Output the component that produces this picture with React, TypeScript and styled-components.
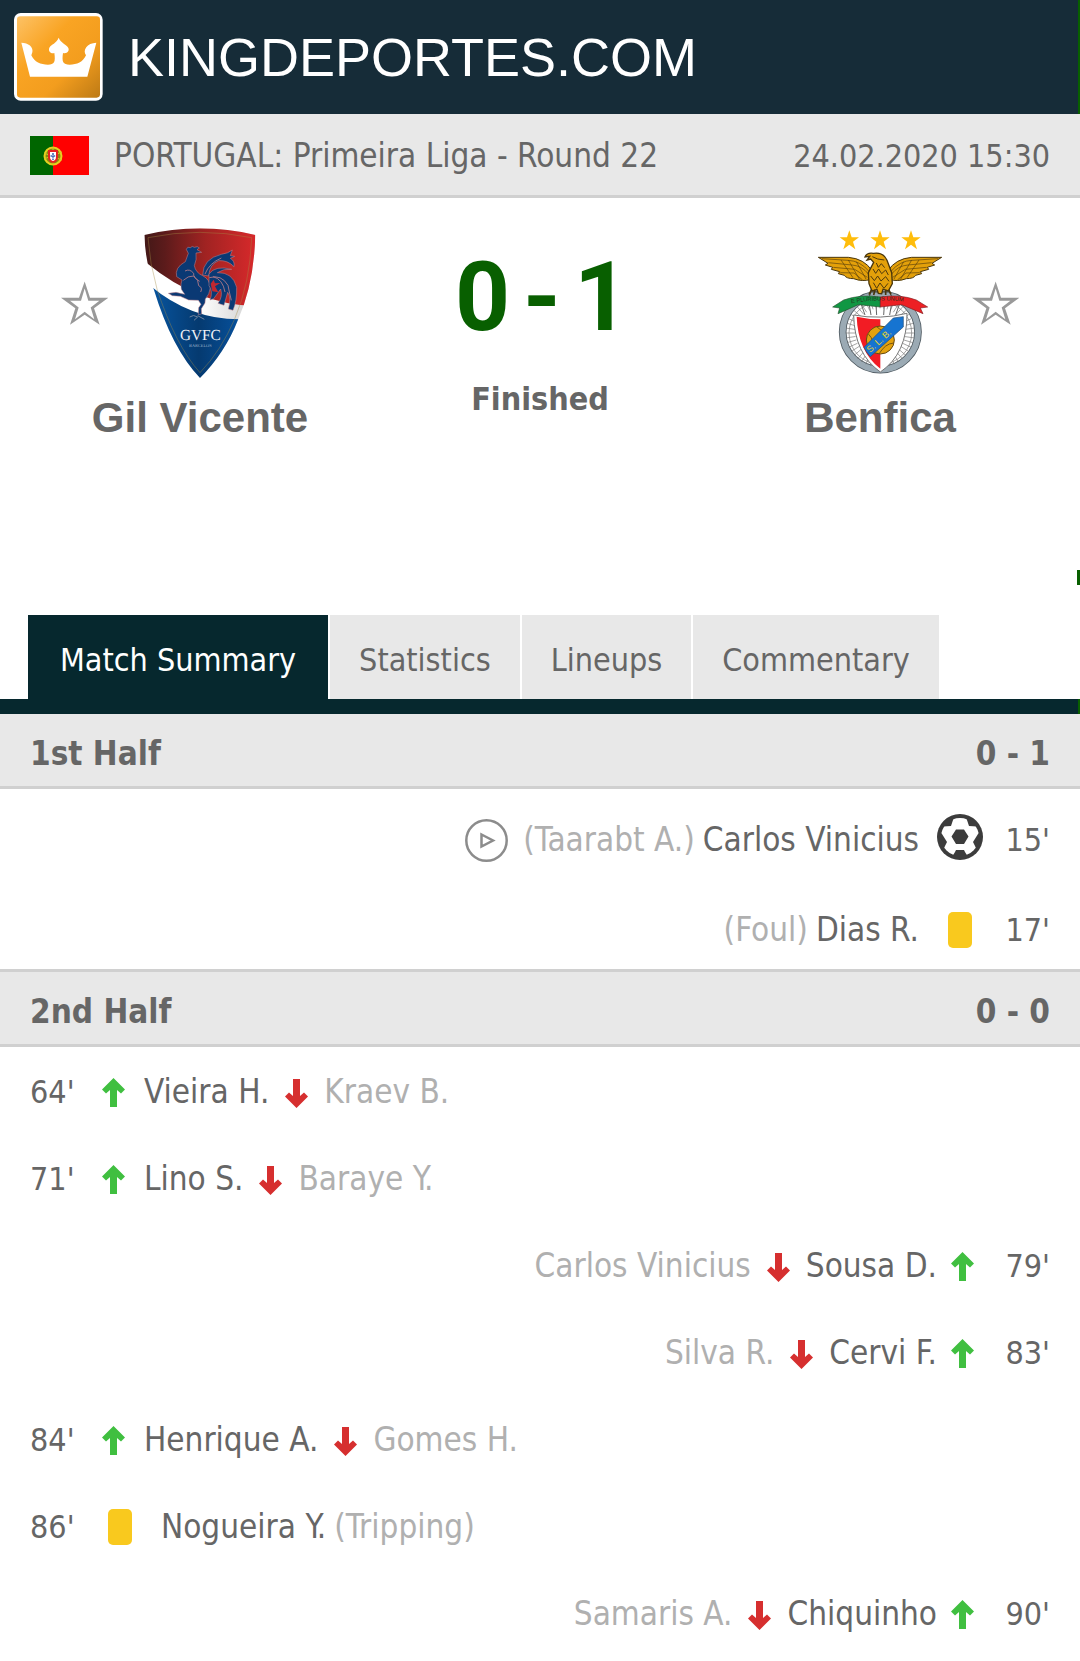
import React, { useState } from "react";
import styled, { createGlobalStyle } from "styled-components";

const sans = `"DejaVu Sans Condensed", "DejaVu Sans", Tahoma, sans-serif`;
const arial = `"Liberation Sans", Arial, sans-serif`;

const GlobalStyle = createGlobalStyle`
  * { box-sizing: border-box; }
  body { margin: 0; background: #fff; color: #666; font: 32px/40px ${sans}; }
  h1, h2, h3, p, ul { margin: 0; padding: 0; font: inherit; }
  ul { list-style: none; }
  button { border: 0; padding: 0; background: none; color: inherit; font: inherit; cursor: pointer; }
  svg { display: block; flex: none; }
`;

const Page = styled.main`
  padding-bottom: 5px;
`;

const SiteHeader = styled.header`
  display: flex;
  align-items: center;
  height: 114px;
  padding-left: 14px;
  background: #162c38;
  border-right: 2px solid #085f00;
`;

const Brand = styled.a`
  display: flex;
  align-items: center;
  gap: 25px;
  color: #fff;
  font: 54px/60px ${arial};
  text-decoration: none;
`;

const LeagueBar = styled.div`
  display: flex;
  align-items: center;
  gap: 25px;
  height: 84px;
  padding: 2px 30px 0;
  background: #e8e8e8;
  border-bottom: 3px solid #d0d0d0;
`;

const League = styled.h2`
  flex: 1;
  font-size: 33px;
`;

const Scoreboard = styled.section`
  display: grid;
  grid-template-columns: 1fr 280px 1fr;
  padding: 30px 0 128px;
`;

const CrestRow = styled.div`
  display: grid;
  grid-template-columns: 1fr 124px 1fr;
  column-gap: 30px;
  align-items: center;
`;

const StarButton = styled.button<{ $side: "left" | "right" }>`
  grid-row: 1;
  grid-column: ${(p) => (p.$side === "left" ? 1 : 3)};
  justify-self: ${(p) => (p.$side === "left" ? "end" : "start")};
`;

const Crest = styled.div`
  grid-row: 1;
  grid-column: 2;
`;

const TeamName = styled.h3`
  margin-top: 16px;
  text-align: center;
  font: bold 42px/48px ${arial};
`;

const Result = styled.div`
  padding-top: 21px;
  text-align: center;
`;

const Score = styled.p`
  display: flex;
  justify-content: center;
  gap: 13px;
  padding-left: 4px;
  color: #085f00;
  font: bold 96px/96px Roboto, ${arial};
`;

const Status = styled.p`
  margin-top: 34px;
  font-weight: bold;
`;

const Marker = styled.div`
  width: 3px;
  height: 15px;
  margin: 0 0 30px auto;
  background: #085f00;
`;

const Tabs = styled.div`
  display: flex;
  gap: 2px;
  padding-left: 28px;
`;

const Tab = styled.button<{ $active: boolean }>`
  height: 84px;
  padding: 5px 29px 0;
  background: ${(p) => (p.$active ? "#06282e" : "#e8e8e8")};
  color: ${(p) => (p.$active ? "#fff" : "#666")};

  &:first-child {
    padding-left: 32px;
    padding-right: 32px;
  }
`;

const TabRule = styled.div`
  height: 15px;
  background: #06282e;
  border-right: 2px solid #085f00;
`;

const HalfHeader = styled.div<{ $ruled?: boolean }>`
  display: flex;
  justify-content: space-between;
  padding: 20px 30px 12px;
  background: #e8e8e8;
  border-top: ${(p) => (p.$ruled ? "3px solid #d0d0d0" : "0")};
  border-bottom: 3px solid #d0d0d0;
  font-size: 33px;
  font-weight: bold;
`;

const EventRow = styled.li<{ $away?: boolean; $tall?: boolean }>`
  display: flex;
  flex-direction: ${(p) => (p.$away ? "row-reverse" : "row")};
  align-items: center;
  height: ${(p) => (p.$tall ? 90 : 87)}px;
  padding: ${(p) => (p.$tall ? 12 : 3)}px 30px 0;
`;

const Minute = styled.span<{ $away?: boolean }>`
  width: 64px;
  text-align: ${(p) => (p.$away ? "right" : "left")};
`;

const ArrowSlot = styled.span<{ $away?: boolean }>`
  padding: ${(p) => (p.$away ? "0 12px 0 14px" : "0 19px 0 8px")};
`;

const IconSlot = styled.span`
  display: flex;
  justify-content: center;
  width: 52px;
`;

const Card = styled.span`
  width: 24px;
  height: 36px;
  border-radius: 5px;
  background: #f9c91e;
`;

const Detail = styled.span<{ $gap: number }>`
  display: flex;
  flex-direction: inherit;
  align-items: center;
  gap: ${(p) => p.$gap}px;
  font-size: 33px;
`;

const CardDetail = styled(Detail)`
  margin: 0 15px;
`;

const Muted = styled.span`
  color: #b0b0b0;
`;

const Logo = () => (
  <svg width="89" height="88" viewBox="43 39 267 264" aria-hidden="true">
    <defs>
      <linearGradient id="gold" x1="0" y1="0" x2="1" y2="1">
        <stop offset="0" stopColor="#fdc266" />
        <stop offset=".35" stopColor="#f9a423" />
        <stop offset=".65" stopColor="#f39d1e" />
        <stop offset="1" stopColor="#bd7a15" />
      </linearGradient>
    </defs>
    <rect x="43" y="39" width="266" height="263" rx="20" fill="#fff" />
    <rect x="52" y="49" width="249" height="244" rx="10" fill="url(#gold)" />
    <path
      fill="#fff"
      d="M65 128C86 128 102 141 98 157L95 166C104 186 123 194 145 194C164 194 168 186 164 159C152 162 145 152 149 143C155 132 170 131 177 113C184 131 201 132 206 144C210 153 202 162 190 159C186 186 190 194 210 194C232 194 250 186 259 166C248 150 262 129 290 128L263 230H91Z"
    />
  </svg>
);

const Flag = () => (
  <svg width="59" height="39" viewBox="0 0 59 39" role="img" aria-label="Portugal">
    <rect width="59" height="39" fill="#f00" />
    <rect width="23" height="39" fill="#060" />
    <circle cx="23" cy="20" r="8.5" fill="#8a8a10" stroke="#e8d020" strokeWidth="2" />
    <path d="M14 17L32 24M14 23L32 16M23 11V29" stroke="#d8c822" />
    <path d="M18 14H28V21Q28 26 23 27Q18 26 18 21Z" fill="#e42222" />
    <path d="M20 16H26V21Q26 24 23 25Q20 24 20 21Z" fill="#fff" />
    <path d="M23 17V24M20.5 20H25.5" stroke="#4469b8" strokeWidth="1.6" strokeDasharray="2 .7" />
  </svg>
);

const Star = () => (
  <svg width="47" height="45" viewBox="61 217 141 132" aria-hidden="true">
    <path
      fill="#999"
      fillRule="evenodd"
      d="M132 217L148 266H203L160 297L177 347L132 317L88 347L104 297L61 266H115ZM132 238L121 275H88L114 295L103 330L132 308L161 330L150 295L176 275H143Z"
    />
  </svg>
);

const GilVicenteCrest = () => (
  <svg width="124" height="150" viewBox="298 53 372 450" role="img" aria-label="Gil Vicente crest">
    <defs>
      <linearGradient id="gvRed">
        <stop offset="0" stopColor="#401817" />
        <stop offset=".2" stopColor="#5c1b1b" />
        <stop offset=".55" stopColor="#a02322" />
        <stop offset="1" stopColor="#d9292b" />
      </linearGradient>
      <linearGradient id="gvBlue">
        <stop offset="0" stopColor="#0755a0" />
        <stop offset=".5" stopColor="#053a70" />
        <stop offset="1" stopColor="#0754a3" />
      </linearGradient>
      <linearGradient id="gvBand">
        <stop offset=".5" stopColor="#fff" />
        <stop offset="1" stopColor="#ccc" />
      </linearGradient>
      <clipPath id="gvShield">
        <path d="M317 74Q484 34 650 74Q646 222 598 328Q560 426 484 503Q400 416 345 236Q321 160 317 74Z" />
      </clipPath>
    </defs>
    <g clipPath="url(#gvShield)">
      <rect x="310" y="50" width="345" height="460" fill="url(#gvBand)" />
      <path d="M310 50H655V287Q480 285 327 160L310 150Z" fill="url(#gvRed)" />
      <path d="M335 226Q465 335 625 326V510H335Z" fill="url(#gvBlue)" />
    </g>
    <path
      d="M328 82Q484 50 639 82Q634 220 588 326Q548 420 484 487Q410 405 355 236Q333 160 328 82Z"
      fill="none"
      stroke="#a58b45"
      strokeWidth="2"
      opacity=".6"
    />
    <g fill="#0a3974" stroke="#c98991" strokeWidth="1.5">
      <path d="M443 117Q446 107 455 112Q461 105 467 111Q477 106 482 113L475 118L489 126L472 128Q475 148 467 166Q471 187 492 196Q514 207 515 232Q513 252 500 266L499 278L488 295L489 311L479 313L480 292L487 282L479 270L450 269L425 258L401 256L389 249L412 246L438 252L428 237Q425 219 430 209L414 199Q407 172 440 154L449 129Z" />
      <path d="M492 194Q493 145 548 132Q569 129 581 119L575 136L588 138L575 144Q589 152 586 169Q567 149 540 151Q513 161 510 197Z" />
      <path d="M511 191Q530 164 579 177Q555 174 536 187Q582 185 594 231Q595 273 583 300L569 296Q579 262 567 246L556 285L538 279Q553 259 546 236L525 265L514 269Q524 243 511 226Z" />
    </g>
    <g fill="none" stroke="#ba7d88" strokeWidth="2.5">
      <path d="M439 182Q453 174 465 189Q463 202 483 213M434 210Q448 196 465 197Q481 209 480 226Q493 232 486 245M499 191Q512 158 548 143M512 202Q548 191 568 225Q571 242 578 270M523 199Q552 206 559 245" />
    </g>
    <path d="M516 220L521 243L539 246L529 228L545 218L529 219L525 208Z" fill="#c22830" />
    <path d="M453 320Q464 311 477 320L466 330M477 316L497 327" fill="none" stroke="#71839d" strokeWidth="3" />
    <text x="485" y="389" textAnchor="middle" fontFamily="Liberation Serif, serif" fontSize="46" textRendering="geometricPrecision" fill="#eef2f6">GVFC</text>
    <text x="485" y="409" textAnchor="middle" fontFamily="Liberation Serif, serif" fontSize="13" textRendering="geometricPrecision" fill="#9db1ca">BARCELOS</text>
  </svg>
);

const starPoints = "0,-30 7,-9 29,-9 11,4 18,27 0,13 -18,27 -11,4 -29,-9 -7,-9";

const Wing = () => (
  <g>
    <path
      d="M112 141H202Q250 145 273 181L270 207Q244 215 218 205Q196 205 190 195L172 190L176 184L151 177L155 171L133 164L141 159Z"
      fill="#e3a00a"
      stroke="#49360c"
      strokeWidth="3"
    />
    <path
      d="M123 145L201 150Q237 151 265 184M142 157L213 164Q243 166 263 192M157 171L221 177L259 201M178 187L219 188L245 209M202 149L236 208M180 149L216 202M226 154L255 206"
      fill="none"
      stroke="#5a410c"
      strokeWidth="2"
    />
  </g>
);

const spokes = Array.from({ length: 44 }, (_, i) => {
  const a = (i / 44) * Math.PI * 2;
  const x = Math.cos(a);
  const y = Math.sin(a);
  return `M${297 + 74 * x} ${368 + 74 * y}L${297 + 103 * x} ${368 + 103 * y}`;
}).join("");

const BenficaCrest = () => (
  <svg width="124" height="150" viewBox="111 53 372 450" role="img" aria-label="Benfica crest">
    {[205, 297, 390].map((x) => (
      <polygon key={x} points={starPoints} transform={`translate(${x} 90)`} fill="#ffbd0b" />
    ))}
    <circle cx="298" cy="365" r="113" fill="#fff" stroke="#4e5960" strokeWidth="23" />
    <circle cx="298" cy="365" r="113" fill="none" stroke="#9baab4" strokeWidth="18" />
    <path d={spokes} stroke="#777" strokeWidth="2" />
    <circle cx="298" cy="368" r="94" fill="none" stroke="#777" strokeWidth="2" />
    <path d="M252 314L240 280M270 314L263 273M287 314L284 270M308 314L311 270M326 314L333 273M344 314L356 280" stroke="#666" strokeWidth="3" />
    <path d="M218 314Q298 329 378 309Q379 430 298 485Q220 430 218 314Z" fill="#fff" stroke="#777" strokeWidth="3" />
    <path d="M227 319Q264 327 298 327V475Q231 424 227 319Z" fill="#f21c24" />
    <circle cx="298" cy="389" r="42" fill="#e4a20e" stroke="#664912" strokeWidth="3" />
    <path d="M262 371Q285 393 267 415M286 348Q305 366 337 374M294 431Q312 400 338 398" fill="none" stroke="#795511" strokeWidth="3" />
    <path d="M367 319V350L268 439Q256 427 249 411L337 323Z" fill="#1674d1" stroke="#244d75" strokeWidth="2" />
    <text x="267" y="428" transform="rotate(-42 267 428)" fontFamily="Liberation Sans, sans-serif" fontSize="27" fill="#e8d52a">S. L. B.</text>
    <path d="M270 245H326L335 266H262Z" fill="#9baab4" stroke="#444" strokeWidth="3" />
    <path d="M298 260Q239 251 188 269L155 290L176 293L171 310Q206 295 232 283Q264 286 298 290Z" fill="#109743" stroke="#285331" strokeWidth="2" />
    <path d="M298 260Q359 251 406 269L440 290L418 293L426 310Q391 295 362 283Q332 286 298 290Z" fill="#ed2024" stroke="#802023" strokeWidth="2" />
    <path id="motto" d="M211 279Q300 263 387 276" fill="none" />
    <text fontFamily="Liberation Sans, sans-serif" fontSize="17" fill="#25331f">
      <textPath href="#motto">E PLURIBUS UNUM</textPath>
    </text>
    <Wing />
    <g transform="matrix(-1 0 0 1 594 0)"><Wing /></g>
    <path
      d="M252 140Q257 126 277 129Q307 124 318 150L332 187L334 220L322 242L306 237L302 250L292 249L288 238L273 242L264 220L262 187L278 156L269 146L258 149L266 138Z"
      fill="#e3a00a"
      stroke="#49360c"
      strokeWidth="4"
    />
    <path
      d="M274 139L290 146L310 149M286 158L292 171L301 160L311 172M276 176L284 189L293 176L302 190L314 179L322 194M269 197L280 211L290 197L300 212L314 199L324 213M277 217L287 234L297 218L309 234L321 219"
      fill="none"
      stroke="#4f390c"
      strokeWidth="3"
    />
    <path d="M272 237L264 253M282 238L278 254M314 238L314 254M323 238L330 252" stroke="#49360c" strokeWidth="5" />
  </svg>
);

const ArrowUp = () => (
  <svg width="23" height="29" viewBox="0 0 23 29" role="img" aria-label="In">
    <path fill="#40bf40" d="M11.5 0L23 11.5L19 15.5L15 12V29H8V12L4 15.5L0 11.5Z" />
  </svg>
);

const ArrowDown = () => (
  <svg width="23" height="31" viewBox="0 -2 23 31" role="img" aria-label="Out">
    <path fill="#d62f2f" d="M11.5 29L23 17.5L19 13.5L15 17V0H8V17L4 13.5L0 17.5Z" />
  </svg>
);

const Ball = () => (
  <svg width="46" height="52" viewBox="0 0 46 52" role="img" aria-label="Goal">
    <circle cx="23" cy="23" r="23" fill="#3c3c3c" />
    <circle cx="23" cy="23" r="19" fill="#fff" />
    <path
      fill="#3c3c3c"
      d="M17 3L14 12L6 12.5L9 5ZM29 3L32 12L40 12.5L37 5ZM3 18L5 20L10 28L7 34L2 30ZM43 18L41 20L36 28L39 34L44 30ZM15 43L18 38L19 36H27L28 38L31 43ZM14.5 22.5L19 15.5H27L31.5 22.5L27 30H19Z"
    />
  </svg>
);

const PlayIcon = () => (
  <svg width="43" height="43" viewBox="0 0 43 43" aria-hidden="true" fill="none" stroke="#8c8c8c">
    <circle cx="21.5" cy="21.5" r="20.2" strokeWidth="2.5" />
    <path d="M16.5 15.5L28 21.5L16.5 27.5Z" strokeWidth="2.5" />
  </svg>
);

type MatchEvent = {
  minute: string;
  kind: "sub" | "card" | "goal";
  player: string;
  other: string;
  away?: boolean;
};

const firstHalf: MatchEvent[] = [
  { minute: "15'", kind: "goal", player: "Carlos Vinicius", other: "(Taarabt A.)", away: true },
  { minute: "17'", kind: "card", player: "Dias R.", other: "(Foul)", away: true },
];

const secondHalf: MatchEvent[] = [
  { minute: "64'", kind: "sub", player: "Vieira H.", other: "Kraev B." },
  { minute: "71'", kind: "sub", player: "Lino S.", other: "Baraye Y." },
  { minute: "79'", kind: "sub", player: "Sousa D.", other: "Carlos Vinicius", away: true },
  { minute: "83'", kind: "sub", player: "Cervi F.", other: "Silva R.", away: true },
  { minute: "84'", kind: "sub", player: "Henrique A.", other: "Gomes H." },
  { minute: "86'", kind: "card", player: "Nogueira Y.", other: "(Tripping)" },
  { minute: "90'", kind: "sub", player: "Chiquinho", other: "Samaris A.", away: true },
];

const Event = ({ event, tall }: { event: MatchEvent; tall?: boolean }) => (
  <EventRow $away={event.away} $tall={tall}>
    <Minute $away={event.away}>{event.minute}</Minute>
    {event.kind === "sub" ? (
      <>
        <ArrowSlot $away={event.away}><ArrowUp /></ArrowSlot>
        <Detail $gap={16}>
          <span>{event.player}</span>
          <ArrowDown />
          <Muted>{event.other}</Muted>
        </Detail>
      </>
    ) : (
      <>
        <IconSlot>{event.kind === "goal" ? <Ball /> : <Card />}</IconSlot>
        <CardDetail $gap={8}>
          <span>{event.player}</span>
          <Muted>{event.other}</Muted>
        </CardDetail>
        {event.kind === "goal" && (
          <button aria-label="Play goal video"><PlayIcon /></button>
        )}
      </>
    )}
  </EventRow>
);

const tabNames = ["Match Summary", "Statistics", "Lineups", "Commentary"];

export default function App() {
  const [active, setActive] = useState(tabNames[0]);
  return (
    <Page>
      <GlobalStyle />
      <SiteHeader>
        <Brand href="#">
          <Logo />
          KINGDEPORTES.COM
        </Brand>
      </SiteHeader>
      <LeagueBar>
        <Flag />
        <League>PORTUGAL: Primeira Liga - Round 22</League>
        <time dateTime="2020-02-24T15:30">24.02.2020 15:30</time>
      </LeagueBar>
      <Scoreboard>
        <div>
          <CrestRow>
            <StarButton $side="left" aria-label="Follow Gil Vicente"><Star /></StarButton>
            <Crest><GilVicenteCrest /></Crest>
          </CrestRow>
          <TeamName>Gil Vicente</TeamName>
        </div>
        <Result>
          <Score><span>0</span><span>-</span><span>1</span></Score>
          <Status>Finished</Status>
        </Result>
        <div>
          <CrestRow>
            <Crest><BenficaCrest /></Crest>
            <StarButton $side="right" aria-label="Follow Benfica"><Star /></StarButton>
          </CrestRow>
          <TeamName>Benfica</TeamName>
        </div>
      </Scoreboard>
      <Marker />
      <Tabs role="tablist">
        {tabNames.map((name) => (
          <Tab
            key={name}
            role="tab"
            aria-selected={name === active}
            $active={name === active}
            onClick={() => setActive(name)}
          >
            {name}
          </Tab>
        ))}
      </Tabs>
      <TabRule />
      <section>
        <HalfHeader><h3>1st Half</h3><span>0 - 1</span></HalfHeader>
        <ul>
          {firstHalf.map((e) => <Event key={e.minute} event={e} tall />)}
        </ul>
      </section>
      <section>
        <HalfHeader $ruled><h3>2nd Half</h3><span>0 - 0</span></HalfHeader>
        <ul>
          {secondHalf.map((e) => <Event key={e.minute} event={e} />)}
        </ul>
      </section>
    </Page>
  );
}
